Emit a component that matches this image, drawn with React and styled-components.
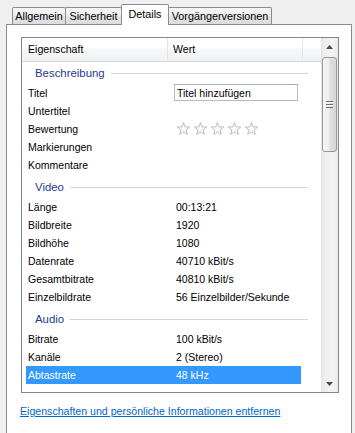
import React from "react";
import styled, { createGlobalStyle } from "styled-components";

const Global = createGlobalStyle`
  html, body { margin: 0; padding: 0; background: #f0f0f0; }
  body { font-family: "Liberation Sans", Arial, sans-serif; color: #000; }
`;

const Window = styled.div`
  width: 355px;
  height: 433px;
  background: #f0f0f0;
  overflow: hidden;
  display: flex;
  flex-direction: column;
`;

const TabStrip = styled.div`
  display: flex;
  align-items: flex-end;
  height: 24px;
  padding-left: 12px;
  box-sizing: border-box;
  flex-shrink: 0;
`;

const Tab = styled.div`
  position: relative;
  z-index: ${(p) => (p.$active ? 2 : 1)};
  box-sizing: border-box;
  width: ${(p) => p.$w}px;
  height: ${(p) => (p.$active ? 21 : 17)}px;
  margin-left: -1px;
  margin-bottom: ${(p) => (p.$active ? -1 : 0)}px;
  &:first-child { margin-left: 0; }
  border: 1px solid #898c95;
  border-bottom: none;
  border-radius: 2px 2px 0 0;
  background: ${(p) =>
    p.$active
      ? "#ffffff"
      : "linear-gradient(#f6f6f6, #eeeeee 50%, #e5e5e5 51%, #dcdcdc)"};
  display: flex;
  align-items: center;
  justify-content: center;
  padding-bottom: ${(p) => (p.$active ? 3 : 0)}px;
  font-size: 10.8px;
  white-space: nowrap;
`;

const Panel = styled.div`
  flex: 1;
  margin-left: 6px;
  width: 346px;
  box-sizing: border-box;
  border: 1px solid #898c95;
  border-bottom: none;
  background: #ffffff;
  padding: 12px 0 0 14px;
  display: flex;
  flex-direction: column;
`;

const ListBox = styled.div`
  width: 318px;
  height: 356px;
  box-sizing: border-box;
  border: 1px solid #828790;
  display: flex;
  overflow: hidden;
  flex-shrink: 0;
`;

const Main = styled.div`
  flex: 1;
  display: flex;
  flex-direction: column;
  overflow: hidden;
  font-size: 10.5px;
`;

const Header = styled.div`
  display: grid;
  grid-template-columns: 146px 135px 1fr;
  height: 24px;
  box-sizing: border-box;
  border-bottom: 1px solid #d5d5d5;
  background: linear-gradient(#ffffff, #ffffff 45%, #f6f7f8 46%, #f1f2f4);
  flex-shrink: 0;
`;

const HeadCell = styled.div`
  display: flex;
  align-items: center;
  padding: 0 0 2px ${(p) => p.$pad}px;
  border-right: ${(p) => (p.$last ? "none" : "1px solid #e2e5ea")};
  font-size: 10.6px;
`;

const Group = styled.div`
  display: flex;
  align-items: center;
  height: ${(p) => (p.$first ? 22 : 24)}px;
  padding: ${(p) => (p.$first ? 0 : 2)}px 13px 0 13px;
  box-sizing: border-box;
  flex-shrink: 0;
`;

const GroupTitle = styled.span`
  color: #1e3991;
  font-size: 11.4px;
  white-space: nowrap;
`;

const GroupLine = styled.div`
  flex: 1;
  height: 1px;
  margin-left: 6px;
  background: #cdd6e1;
`;

const Row = styled.div`
  display: grid;
  grid-template-columns: 150px 1fr;
  align-items: center;
  width: 275px;
  height: 18px;
  margin-left: 4px;
  flex-shrink: 0;
  background: ${(p) => (p.$sel ? "#3399ff" : "transparent")};
  color: ${(p) => (p.$sel ? "#ffffff" : "#000000")};
  white-space: nowrap;
`;

const Label = styled.span`
  padding-left: 2px;
`;

const Value = styled.span``;

const TextBox = styled.div`
  align-self: start;
  width: 124px;
  height: 17px;
  margin-left: -2px;
  box-sizing: border-box;
  border: 1px solid #b3bccb;
  border-top-color: #a4adbb;
  padding-left: 2px;
  display: flex;
  align-items: center;
  background: #fff;
`;

const Stars = styled.div`
  display: flex;
  gap: 2px;
  align-items: center;
`;

const ScrollBar = styled.div`
  width: 17px;
  flex-shrink: 0;
  display: flex;
  flex-direction: column;
  background: linear-gradient(to right, #e4e4e4, #efefef 20%, #f3f3f3 70%, #e9e9e9);
`;

const ArrowBtn = styled.div`
  height: 17px;
  display: flex;
  align-items: center;
  justify-content: center;
  flex-shrink: 0;
`;

const Thumb = styled.div`
  margin: 2px 1px 0 1px;
  height: 95px;
  box-sizing: border-box;
  border: 1px solid #989898;
  border-radius: 3px;
  background: linear-gradient(to right, #f6f6f6, #eeeeee 45%, #dfdfdf 55%, #d6d6d6);
  display: flex;
  align-items: center;
  justify-content: center;
  flex-shrink: 0;
`;

const Spacer = styled.div`
  flex: 1;
`;

const Link = styled.a`
  margin-top: 12px;
  margin-left: -1px;
  font-size: 10.6px;
  color: #0066cc;
  text-decoration: underline;
  white-space: nowrap;
  cursor: pointer;
`;

const Star = () => (
  <svg width="15" height="14" viewBox="0 0 15 14">
    <polygon
      points="7.5,0.6 9.15,4.8 13.7,5.05 10.15,7.95 11.3,12.4 7.5,9.9 3.7,12.4 4.85,7.95 1.3,5.05 5.85,4.8"
      fill="#fbfbfb"
      stroke="#bdbdbd"
      strokeWidth="1"
      strokeLinejoin="round"
    />
  </svg>
);

const Arrow = ({ down }) => (
  <svg width="7" height="4" viewBox="0 0 7 4">
    <polygon
      points={down ? "0,0 7,0 3.5,4" : "0,4 7,4 3.5,0"}
      fill="#4a4a4a"
    />
  </svg>
);

const Grip = () => (
  <svg width="7" height="7" viewBox="0 0 7 7">
    <rect x="0" y="0" width="7" height="1" fill="#6e6e6e" />
    <rect x="0" y="1" width="7" height="1" fill="#fbfbfb" />
    <rect x="0" y="3" width="7" height="1" fill="#6e6e6e" />
    <rect x="0" y="4" width="7" height="1" fill="#fbfbfb" />
    <rect x="0" y="6" width="7" height="1" fill="#6e6e6e" />
  </svg>
);

const tabs = [
  { t: "Allgemein", w: 54 },
  { t: "Sicherheit", w: 57 },
  { t: "Details", w: 48, active: true },
  { t: "Vorgängerversionen", w: 104 },
];

const sections = [
  {
    title: "Beschreibung",
    rows: [
      ["Titel", "__input"],
      ["Untertitel", ""],
      ["Bewertung", "__stars"],
      ["Markierungen", ""],
      ["Kommentare", ""],
    ],
  },
  {
    title: "Video",
    rows: [
      ["Länge", "00:13:21"],
      ["Bildbreite", "1920"],
      ["Bildhöhe", "1080"],
      ["Datenrate", "40710 kBit/s"],
      ["Gesamtbitrate", "40810 kBit/s"],
      ["Einzelbildrate", "56 Einzelbilder/Sekunde"],
    ],
  },
  {
    title: "Audio",
    rows: [
      ["Bitrate", "100 kBit/s"],
      ["Kanäle", "2 (Stereo)"],
      ["Abtastrate", "48 kHz", true],
    ],
  },
  {
    title: "Medien",
    rows: [],
  },
];

const renderValue = (v) => {
  if (v === "__input") return <TextBox>Titel hinzufügen</TextBox>;
  if (v === "__stars")
    return (
      <Stars>
        {[0, 1, 2, 3, 4].map((i) => (
          <Star key={i} />
        ))}
      </Stars>
    );
  return <Value>{v}</Value>;
};

export default function App() {
  return (
    <>
      <Global />
      <Window>
        <TabStrip>
          {tabs.map((t) => (
            <Tab key={t.t} $w={t.w} $active={t.active}>
              {t.t}
            </Tab>
          ))}
        </TabStrip>
        <Panel>
          <ListBox>
            <Main>
              <Header>
                <HeadCell $pad={6}>Eigenschaft</HeadCell>
                <HeadCell $pad={5}>Wert</HeadCell>
                <HeadCell $last />
              </Header>
              {sections.map((s, si) => (
                <React.Fragment key={s.title}>
                  <Group $first={si === 0}>
                    <GroupTitle>{s.title}</GroupTitle>
                    <GroupLine />
                  </Group>
                  {s.rows.map(([l, v, sel]) => (
                    <Row key={l} $sel={sel}>
                      <Label>{l}</Label>
                      {renderValue(v)}
                    </Row>
                  ))}
                </React.Fragment>
              ))}
            </Main>
            <ScrollBar>
              <ArrowBtn>
                <Arrow />
              </ArrowBtn>
              <Thumb>
                <Grip />
              </Thumb>
              <Spacer />
              <ArrowBtn>
                <Arrow down />
              </ArrowBtn>
            </ScrollBar>
          </ListBox>
          <Link>Eigenschaften und persönliche Informationen entfernen</Link>
        </Panel>
      </Window>
    </>
  );
}
